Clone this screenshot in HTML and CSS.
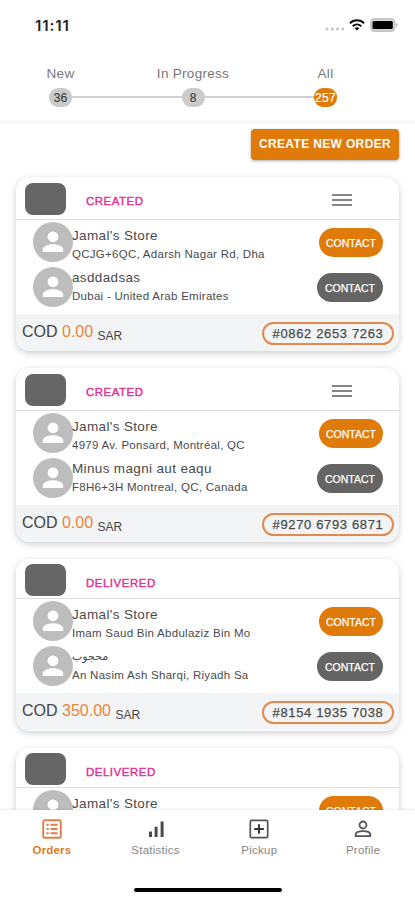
FILE: index.html
```html
<!DOCTYPE html>
<html lang="en">
<head>
<meta charset="utf-8">
<title>Orders</title>
<link rel="stylesheet" href="styles.css">
</head>
<body>
<svg class="sprite" width="0" height="0">
  <symbol id="avatar" viewBox="0 0 40 40"><circle cx="20" cy="20" r="20" fill="#bdbdbd"/><circle cx="20" cy="14.8" r="5.4" fill="#fff"/><path d="M9.8 30V27.4C9.8 24 16 22.2 20 22.2S30.200 24 30.200 27.4V30Z" fill="#fff"/></symbol>
  <symbol id="menu" viewBox="0 0 20 14"><path d="M0 2H20M0 7H20M0 12H20" stroke="#858585" stroke-width="2"/></symbol>
</svg>
<div class="app">
  <div class="status">
    <span class="time">11:11</span>
    <div class="signals">
      <svg width="20" height="4" viewBox="0 0 20 4" fill="#c4c4c4"><circle cx="2" cy="2" r="1.500"/><circle cx="7.300" cy="2" r="1.500"/><circle cx="12.500" cy="2" r="1.500"/><circle cx="17.800" cy="2" r="1.500"/></svg>
      <svg class="wifi" width="16" height="12" viewBox="0 0 16 12" fill="none" stroke="#111" stroke-width="2"><path d="M.9 4.300C4.900.3 11.100.3 15.100 4.300M3.700 7.200C6.200 4.900 9.800 4.900 12.300 7.200"/><path d="M5.600 9.200C7 7.900 9 7.900 10.400 9.200L8 11.600Z" fill="#111" stroke="none"/></svg>
      <svg class="battery" width="28" height="14" viewBox="0 0 28 14"><rect x=".8" y=".8" width="23.900" height="12.400" rx="3.600" fill="#d4d4d4" stroke="#c4c4c4" stroke-width="1.500"/><rect x="2.500" y="2.900" width="20.300" height="8.200" rx="1.500" fill="#000"/><path d="M26 5V9Q27.500 8.300 27.500 7T26 5" fill="#bbb"/></svg>
    </div>
  </div>

  <div class="steps">
    <div class="step"><span class="step-name">New</span><span class="count">36</span></div>
    <div class="rail"></div>
    <div class="step"><span class="step-name">In Progress</span><span class="count">8</span></div>
    <div class="rail"></div>
    <div class="step"><span class="step-name">All</span><span class="count on">257</span></div>
  </div>

  <div class="list">
    <button class="create">CREATE NEW ORDER</button>

    <div class="card">
      <div class="head"><div class="thumb"></div><span class="state">CREATED</span><svg class="menu"><use href="#menu"/></svg></div>
      <div class="body">
        <div class="avatars"><svg><use href="#avatar"/></svg><svg><use href="#avatar"/></svg></div>
        <div class="people">
          <div class="name">Jamal's Store</div><div class="addr">QCJG+6QC, Adarsh Nagar Rd, Dha</div>
          <div class="name">asddadsas</div><div class="addr">Dubai - United Arab Emirates</div>
        </div>
        <div class="actions"><button class="contact">CONTACT</button><button class="contact dark">CONTACT</button></div>
      </div>
      <div class="foot"><div class="cod">COD <b>0.00</b> <small>SAR</small></div><div class="num">#0862 2653 7263</div></div>
    </div>

    <div class="card">
      <div class="head"><div class="thumb"></div><span class="state">CREATED</span><svg class="menu"><use href="#menu"/></svg></div>
      <div class="body">
        <div class="avatars"><svg><use href="#avatar"/></svg><svg><use href="#avatar"/></svg></div>
        <div class="people">
          <div class="name">Jamal's Store</div><div class="addr">4979 Av. Ponsard, Montréal, QC</div>
          <div class="name">Minus magni aut eaqu</div><div class="addr">F8H6+3H Montreal, QC, Canada</div>
        </div>
        <div class="actions"><button class="contact">CONTACT</button><button class="contact dark">CONTACT</button></div>
      </div>
      <div class="foot"><div class="cod">COD <b>0.00</b> <small>SAR</small></div><div class="num">#9270 6793 6871</div></div>
    </div>

    <div class="card delivered">
      <div class="head"><div class="thumb"></div><span class="state">DELIVERED</span></div>
      <div class="body">
        <div class="avatars"><svg><use href="#avatar"/></svg><svg><use href="#avatar"/></svg></div>
        <div class="people">
          <div class="name">Jamal's Store</div><div class="addr">Imam Saud Bin Abdulaziz Bin Mo</div>
          <div class="name arabic">محجوب</div><div class="addr">An Nasim Ash Sharqi, Riyadh Sa</div>
        </div>
        <div class="actions"><button class="contact">CONTACT</button><button class="contact dark">CONTACT</button></div>
      </div>
      <div class="foot"><div class="cod">COD <b>350.00</b> <small>SAR</small></div><div class="num">#8154 1935 7038</div></div>
    </div>

    <div class="card delivered">
      <div class="head"><div class="thumb"></div><span class="state">DELIVERED</span></div>
      <div class="body">
        <div class="avatars"><svg><use href="#avatar"/></svg></div>
        <div class="people"><div class="name">Jamal's Store</div></div>
        <div class="actions"><button class="contact">CONTACT</button></div>
      </div>
    </div>
  </div>

  <div class="nav">
    <div class="tabs">
      <div class="tab active"><svg viewBox="0 0 20 20" fill="none" stroke="#df7d48"><rect x="1.200" y="1.200" width="17.600" height="17.600" rx="1.500" stroke-width="1.900"/><path d="M4.500 5.800H6.700M4.500 10H6.700M4.500 14.200H6.700M8.500 5.800H15.500M8.500 10H15.500M8.500 14.200H15.500" stroke-width="2"/></svg><span>Orders</span></div>
      <div class="tab"><svg viewBox="0 0 20 20" fill="#4a4a4a"><path d="M3 12.500H6V18H3ZM8.600 7.800H11.600V18H8.600ZM14.600 2.400H17.600V18H14.600Z"/></svg><span>Statistics</span></div>
      <div class="tab"><svg viewBox="0 0 20 20" fill="none" stroke="#555"><rect x="1.300" y="1.300" width="17.400" height="17.400" rx="1.500" stroke-width="1.700"/><path d="M10 5.200V14.800M5.200 10H14.800" stroke="#333" stroke-width="1.900"/></svg><span>Pickup</span></div>
      <div class="tab"><svg viewBox="0 0 20 20" fill="none" stroke="#555" stroke-width="1.800"><circle cx="10" cy="6" r="3.500"/><path d="M2.700 17.200V15.500C2.700 13 7 12.100 10 12.100S17.300 13 17.300 15.500V17.200Z"/></svg><span>Profile</span></div>
    </div>
    <div class="home"></div>
  </div>
</div>
</body>
</html>
```
FILE: styles.css
```css
* { box-sizing: border-box; }
body { margin: 0; background: #fff; font-family: "Liberation Sans", Arial, sans-serif; color: #444; }
button { border: 0; padding: 0; font-family: inherit; color: #fff; }
.sprite { display: block; height: 0; }
.app { width: 415px; height: 900px; display: flex; flex-direction: column; overflow: hidden; white-space: nowrap; }

.status { height: 60px; flex: none; display: flex; justify-content: space-between; padding: 17px 17px 0 35px; }
.time { font: 600 15px/17px Inter, sans-serif; letter-spacing: .9px; color: #222; }
.signals { display: flex; height: 16px; align-items: center; }
.signals svg { flex: none; margin-top: 8px; }
.signals .wifi { margin: 0 0 0 4px; }
.signals .battery { margin: 0 0 0 5px; }

.steps { height: 64px; flex: none; display: flex; align-items: flex-start; padding: 5px 78px 0 49px; border-bottom: 4px solid #f8f8f8; }
.step { width: 23px; display: flex; flex-direction: column; align-items: center; gap: 6px; }
.step-name { font-size: 13.500px; line-height: 17px; letter-spacing: .3px; color: #777; }
.count { width: 23px; height: 19px; border-radius: 9px; background: #cbcbcb; color: #444; font-size: 12px; line-height: 20px; display: flex; justify-content: center; -webkit-text-stroke: .2px; }
.count.on { background: #e07a08; color: #fff; letter-spacing: .4px; }
.rail { flex: 1; height: 2px; margin-top: 31px; background: #d0d0d0; }

.list { flex: 1; min-height: 0; overflow: hidden; padding: 5px 16px 0 16px; display: flex; flex-direction: column; }
.create { flex: none; align-self: flex-end; width: 148px; height: 31px; margin-bottom: 17px; border-radius: 4px; background: #e07a08; box-shadow: 0 1px 3px rgba(0,0,0,.35); font-size: 12px; font-weight: 700; letter-spacing: .35px; line-height: 31px; }

.card { flex: none; height: 174px; margin-bottom: 17px; border-radius: 14px; background: #fff; overflow: hidden; box-shadow: 0 2px 7px rgba(0,0,0,.2); }
.card.delivered { height: 172px; }
.head { height: 43px; display: flex; align-items: flex-start; padding: 6px 47px 0 9px; border-bottom: 1px solid #dedede; }
.thumb { width: 41px; height: 32px; border-radius: 8px; background: #666; }
.state { margin: 11px 0 0 20px; font-size: 11.500px; line-height: 15px; letter-spacing: .5px; color: #e32e93; -webkit-text-stroke: .4px; }
.menu { width: 20px; height: 14px; margin: 10px 0 0 auto; }
.delivered .head { height: 40px; padding-top: 5px; }
.delivered .state { margin-top: 12px; }
.body { height: 94px; display: flex; padding: 2px 16px 0 17px; }
.avatars { width: 39px; display: flex; flex-direction: column; gap: 5px; }
.avatars svg { width: 40px; height: 40px; flex: none; }
.people { flex: 1; padding: 4px 0 0 0; color: #4a4a4a; }
.name { font-size: 13.500px; line-height: 19px; letter-spacing: .35px; }
.addr { font-size: 11.500px; line-height: 18px; letter-spacing: .28px; margin-bottom: 5px; }
.arabic { font-family: "DejaVu Sans", sans-serif; font-size: 11px; letter-spacing: 0; }
.actions { display: flex; flex-direction: column; align-items: flex-end; gap: 16px; padding-top: 6px; }
.contact { width: 64px; height: 29px; flex: none; border-radius: 15px; background: #e07a08; font-size: 10.500px; letter-spacing: 0; -webkit-text-stroke: .25px; }
.contact.dark { width: 66px; background: #646464; }
.foot { height: 37px; display: flex; justify-content: space-between; align-items: flex-start; padding: 8px 5px 0 6px; background: #f2f4f6; }
.cod { font-size: 16px; line-height: 20px; }
.cod b { font-weight: 400; color: #e8853d; }
.cod small { font-size: 12px; position: relative; top: 3px; }
.num { width: 132px; height: 23px; border: 2px solid #e3894c; border-radius: 12px; font-size: 13px; line-height: 20px; text-align: center; letter-spacing: .65px; color: #4a4a4a; -webkit-text-stroke: .25px; }

.nav { height: 90px; flex: none; background: #fff; box-shadow: 0 -1px 2px rgba(0,0,0,.08); position: relative; }
.tabs { display: grid; grid-template-columns: repeat(4, 1fr); padding-top: 9px; }
.tab { display: flex; flex-direction: column; align-items: center; gap: 3px; font-size: 11.500px; line-height: 16px; color: #858585; letter-spacing: .25px; }
.tab svg { width: 20px; height: 20px; }
.tab.active { color: #e07a22; font-weight: 700; letter-spacing: .15px; }
.home { width: 148px; height: 4px; border-radius: 2px; background: #000; margin: 30px 0 0 134px; }
```
